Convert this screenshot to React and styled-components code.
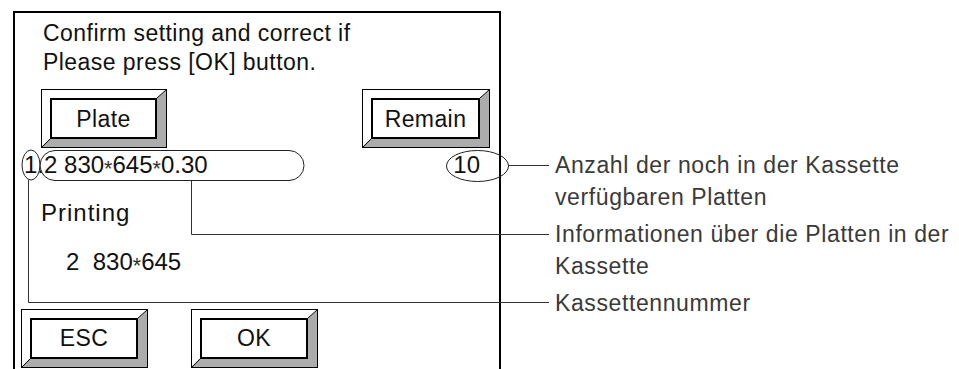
import React from "react";
import styled, { createGlobalStyle } from "styled-components";

const Global = createGlobalStyle`
  html, body { margin: 0; padding: 0; background: #fff; }
  body { font-family: "Liberation Sans", Arial, sans-serif; color: #111; }
`;

const Figure = styled.div`
  position: relative;
  width: 959px;
  height: 369px;
  overflow: hidden;
  display: flex;
  align-items: flex-start;
  background: #fff;
`;

const Panel = styled.div`
  box-sizing: border-box;
  flex-shrink: 0;
  width: 488px;
  height: 400px;
  margin: 11px 0 0 13px;
  border: 2px solid #000;
  border-bottom: none;
  padding-top: 6px;
  display: flex;
  flex-direction: column;
`;

const Message = styled.div`
  padding-left: 28px;
  font-size: 23px;
  line-height: 29px;
  letter-spacing: 0.45px;
`;

const ButtonRow = styled.div`
  display: flex;
  justify-content: ${(p) => (p.$spread ? "space-between" : "flex-start")};
  gap: ${(p) => p.$gap || 0}px;
  margin-top: ${(p) => p.$top}px;
  padding: 0 ${(p) => p.$right || 0}px 0 ${(p) => p.$left}px;
`;

const Outer = styled.div`
  box-sizing: border-box;
  width: ${(p) => p.$w}px;
  height: 59px;
  border: 1px solid #000;
  flex-shrink: 0;
`;

const Bevel = styled.div`
  position: relative;
  box-sizing: border-box;
  height: 100%;
  border-style: solid;
  border-width: 8px 9px 8px 8px;
  border-color: #fff #acacac #acacac #fff;

  &::before,
  &::after {
    content: "";
    position: absolute;
    width: 9px;
    height: 8px;
    background: linear-gradient(
      to bottom right,
      transparent calc(50% - 0.8px),
      #111 50%,
      transparent calc(50% + 0.8px)
    );
  }
  &::before {
    top: -8px;
    right: -9px;
  }
  &::after {
    bottom: -8px;
    left: -8px;
    width: 8px;
  }
`;

const Face = styled.div`
  box-sizing: border-box;
  height: 100%;
  border: 2px solid #000;
  background: #fff;
  display: flex;
  align-items: center;
  justify-content: center;
  font-size: 23px;
  letter-spacing: 0.4px;
  padding-top: 1px;
`;

const ScreenButton = ({ w, children }) => (
  <Outer $w={w}>
    <Bevel>
      <Face>{children}</Face>
    </Bevel>
  </Outer>
);

const DataRow = styled.div`
  display: flex;
  justify-content: space-between;
  margin-top: 2px;
  padding: 0 19px 0 9px;
  font-size: 24px;
  line-height: 30px;
`;

const Star = styled.span`
  font-size: 0.9em;
  color: #333;
  vertical-align: -0.16em;
`;

const TextLine = styled.div`
  margin-top: ${(p) => p.$top}px;
  padding-left: ${(p) => p.$left}px;
  font-size: 24px;
  line-height: 30px;
  letter-spacing: ${(p) => p.$spacing || 0}px;
  white-space: pre;
`;

const Labels = styled.div`
  margin: 149px 0 0 54px;
  display: flex;
  flex-direction: column;
  gap: 5px;
`;

const Label = styled.div`
  font-size: 23px;
  line-height: 32px;
  letter-spacing: 0.6px;
  color: #3a3a3a;
  white-space: nowrap;
`;

const Overlay = styled.svg`
  position: absolute;
  left: 0;
  top: 0;
  pointer-events: none;
`;

const Size = ({ parts }) =>
  parts.map((p, i) => (
    <React.Fragment key={i}>
      {i > 0 && <Star>*</Star>}
      {p}
    </React.Fragment>
  ));

export default function App() {
  return (
    <>
      <Global />
      <Figure>
        <Panel>
          <Message>
            Confirm setting and correct if
            <br />
            Please press [OK] button.
          </Message>
          <ButtonRow $spread $top={12} $left={26} $right={9}>
            <ScreenButton w={126}>Plate</ScreenButton>
            <ScreenButton w={128}>Remain</ScreenButton>
          </ButtonRow>
          <DataRow>
            <span>
              1.2 <Size parts={["830", "645", "0.30"]} />
            </span>
            <span>10</span>
          </DataRow>
          <TextLine $top={14} $left={26} $spacing={1}>
            Printing
          </TextLine>
          <TextLine $top={19} $left={51}>
            {"2  "}
            <Size parts={["830", "645"]} />
          </TextLine>
          <ButtonRow $top={27} $left={6} $gap={43}>
            <ScreenButton w={127}>ESC</ScreenButton>
            <ScreenButton w={127}>OK</ScreenButton>
          </ButtonRow>
        </Panel>
        <Labels>
          <Label>
            Anzahl der noch in der Kassette
            <br />
            verfügbaren Platten
          </Label>
          <Label>
            Informationen über die Platten in der
            <br />
            Kassette
          </Label>
          <Label>Kassettennummer</Label>
        </Labels>
        <Overlay width="959" height="369" viewBox="0 0 959 369">
          <g fill="none" stroke="#222" strokeWidth="1">
            <ellipse cx="31" cy="165" rx="9" ry="15" />
            <rect x="40" y="150.5" width="264" height="30" rx="15" ry="15" />
            <ellipse cx="477.5" cy="166" rx="31" ry="15.5" />
          </g>
          <g fill="none" stroke="#333" strokeWidth="1">
            <path d="M508.5 165.5 H549" />
            <path d="M191.5 180.5 V234.5 H549" />
            <path d="M28.5 180 V302.5 H549" />
          </g>
        </Overlay>
      </Figure>
    </>
  );
}
